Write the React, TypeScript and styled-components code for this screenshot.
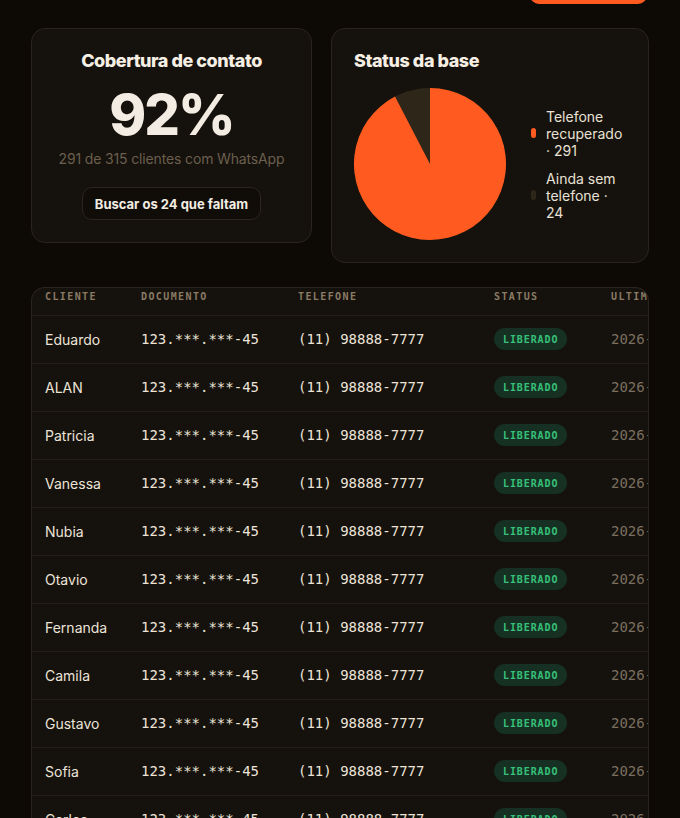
import React from 'react'
import styled, { createGlobalStyle } from 'styled-components'

const GlobalStyle = createGlobalStyle`
  html, body {
    margin: 0;
    padding: 0;
    background: #0d0a06;
  }
  body {
    font-family: Inter, 'Noto Sans', sans-serif;
    color: #efe7dc;
  }
`

const Page = styled.div`
  padding: 0 31px 40px;
`

const TopBar = styled.div`
  display: flex;
  justify-content: flex-end;
  align-items: flex-end;
  height: 4px;
  overflow: hidden;
  padding-right: 2px;
`

const PrimaryButton = styled.button`
  flex: none;
  width: 117px;
  height: 38px;
  border: 0;
  border-radius: 9px;
  background: #ff5a1f;
`

const Cards = styled.div`
  display: grid;
  grid-template-columns: 281px 1fr;
  gap: 19px;
  align-items: start;
  margin-top: 24px;
`

const Card = styled.section<{ $center?: boolean }>`
  display: flex;
  flex-direction: column;
  align-items: ${(p) => (p.$center ? 'center' : 'stretch')};
  padding: 21px 22px 22px;
  border: 1px solid #2a241c;
  border-radius: 14px;
  background: #15110c;
  box-sizing: border-box;
`

const CardTitle = styled.h2`
  margin: 0;
  font-family: Inter, sans-serif;
  font-size: 18px;
  line-height: 22px;
  font-weight: 800;
  letter-spacing: -0.45px;
  color: #f6efe4;
`

const BigNumber = styled.div`
  margin-top: 15px;
  font-family: Inter, sans-serif;
  font-size: 56px;
  line-height: 56px;
  font-weight: 800;
  letter-spacing: -2px;
  color: #f3ece2;
`

const Caption = styled.p`
  margin: 6px 0 0;
  font-size: 14px;
  line-height: 20px;
  letter-spacing: -0.15px;
  color: #6b5f4f;
`

const GhostButton = styled.button`
  margin-top: 18px;
  height: 33px;
  padding: 0 12px;
  border: 1px solid #2b251d;
  border-radius: 10px;
  background: #100d09;
  font-family: Inter, sans-serif;
  font-size: 13px;
  font-weight: 700;
  color: #f3ece2;
`

const ChartRow = styled.div`
  display: flex;
  align-items: center;
  gap: 25px;
  margin-top: 16px;
`

const Legend = styled.ul`
  display: flex;
  flex-direction: column;
  gap: 11px;
  margin: 0;
  padding: 0;
  list-style: none;
`

const LegendItem = styled.li`
  display: flex;
  align-items: center;
  gap: 10px;
  font-size: 14px;
  line-height: 17px;
  color: #e9e1d5;
`

const Swatch = styled.span<{ $color: string }>`
  flex: none;
  width: 5px;
  height: 10px;
  border-radius: 3px;
  background: ${(p) => p.$color};
`

const TableWrap = styled.div`
  margin-top: 24px;
  border: 1px solid #2a241c;
  border-bottom: 0;
  border-radius: 14px 14px 0 0;
  background: #15110c;
  overflow: hidden;
`

const Table = styled.table`
  width: 760px;
  table-layout: fixed;
  border-collapse: collapse;
`

const HeadCell = styled.th`
  height: 27px;
  padding: 3px 13px 0;
  box-sizing: border-box;
  text-align: left;
  vertical-align: top;
  font-family: 'DejaVu Sans Mono', 'Liberation Mono', monospace;
  font-size: 10px;
  line-height: 12px;
  font-weight: 700;
  letter-spacing: 1.4px;
  text-transform: uppercase;
  color: #8a7b65;
  white-space: nowrap;
  overflow: hidden;
`

const Row = styled.tr`
  border-top: 1px solid #231d16;
`

const Cell = styled.td<{ $mono?: boolean; $muted?: boolean }>`
  height: 47px;
  padding: 0 13px;
  font-family: ${(p) =>
    p.$mono ? "'DejaVu Sans Mono', 'Liberation Mono', monospace" : 'Inter, sans-serif'};
  font-size: 14px;
  color: ${(p) => (p.$muted ? '#7a6f60' : '#ece4d8')};
  white-space: nowrap;
  overflow: hidden;
`

const StatusPill = styled.span`
  display: inline-flex;
  align-items: center;
  height: 22px;
  padding: 0 9px;
  border-radius: 11px;
  background: #163123;
  font-family: 'DejaVu Sans Mono', 'Liberation Mono', monospace;
  font-size: 10px;
  font-weight: 700;
  letter-spacing: 0.9px;
  color: #37c07a;
`

const ORANGE = '#ff5a1f'
const DARK = '#2e2619'

const total = 315
const recovered = 291

const clients = [
  'Eduardo',
  'ALAN',
  'Patricia',
  'Vanessa',
  'Nubia',
  'Otavio',
  'Fernanda',
  'Camila',
  'Gustavo',
  'Sofia',
  'Carlos',
  'Mariana',
]

function PieChart({ size, value, max }: { size: number; value: number; max: number }) {
  const r = size / 2
  const angle = (value / max) * Math.PI * 2
  const x = r + r * Math.sin(angle)
  const y = r - r * Math.cos(angle)
  const large = angle > Math.PI ? 1 : 0
  return (
    <svg width={size} height={size} viewBox={`0 0 ${size} ${size}`} style={{ flex: 'none' }}>
      <circle cx={r} cy={r} r={r} fill={DARK} />
      <path d={`M${r} ${r} L${r} 0 A${r} ${r} 0 ${large} 1 ${x} ${y} Z`} fill={ORANGE} />
    </svg>
  )
}

export default function App() {
  const pct = Math.round((recovered / total) * 100)
  return (
    <Page>
      <GlobalStyle />
      <TopBar>
        <PrimaryButton aria-label="Importar" />
      </TopBar>

      <Cards>
        <Card $center>
          <CardTitle>Cobertura de contato</CardTitle>
          <BigNumber>{pct}%</BigNumber>
          <Caption>
            {recovered} de {total} clientes com WhatsApp
          </Caption>
          <GhostButton>Buscar os {total - recovered} que faltam</GhostButton>
        </Card>

        <Card>
          <CardTitle>Status da base</CardTitle>
          <ChartRow>
            <PieChart size={152} value={recovered} max={total} />
            <Legend>
              <LegendItem>
                <Swatch $color={ORANGE} />
                <span>Telefone recuperado · {recovered}</span>
              </LegendItem>
              <LegendItem>
                <Swatch $color={DARK} />
                <span>Ainda sem telefone · {total - recovered}</span>
              </LegendItem>
            </Legend>
          </ChartRow>
        </Card>
      </Cards>

      <TableWrap>
        <Table>
          <colgroup>
            <col style={{ width: 96 }} />
            <col style={{ width: 157 }} />
            <col style={{ width: 196 }} />
            <col style={{ width: 117 }} />
            <col style={{ width: 194 }} />
          </colgroup>
          <thead>
            <tr>
              <HeadCell>Cliente</HeadCell>
              <HeadCell>Documento</HeadCell>
              <HeadCell>Telefone</HeadCell>
              <HeadCell>Status</HeadCell>
              <HeadCell>Ultima consulta</HeadCell>
            </tr>
          </thead>
          <tbody>
            {clients.map((name) => (
              <Row key={name}>
                <Cell>{name}</Cell>
                <Cell $mono>123.***.***-45</Cell>
                <Cell $mono>(11) 98888-7777</Cell>
                <Cell>
                  <StatusPill>LIBERADO</StatusPill>
                </Cell>
                <Cell $mono $muted>
                  2026-01-14 09:32
                </Cell>
              </Row>
            ))}
          </tbody>
        </Table>
      </TableWrap>
    </Page>
  )
}
